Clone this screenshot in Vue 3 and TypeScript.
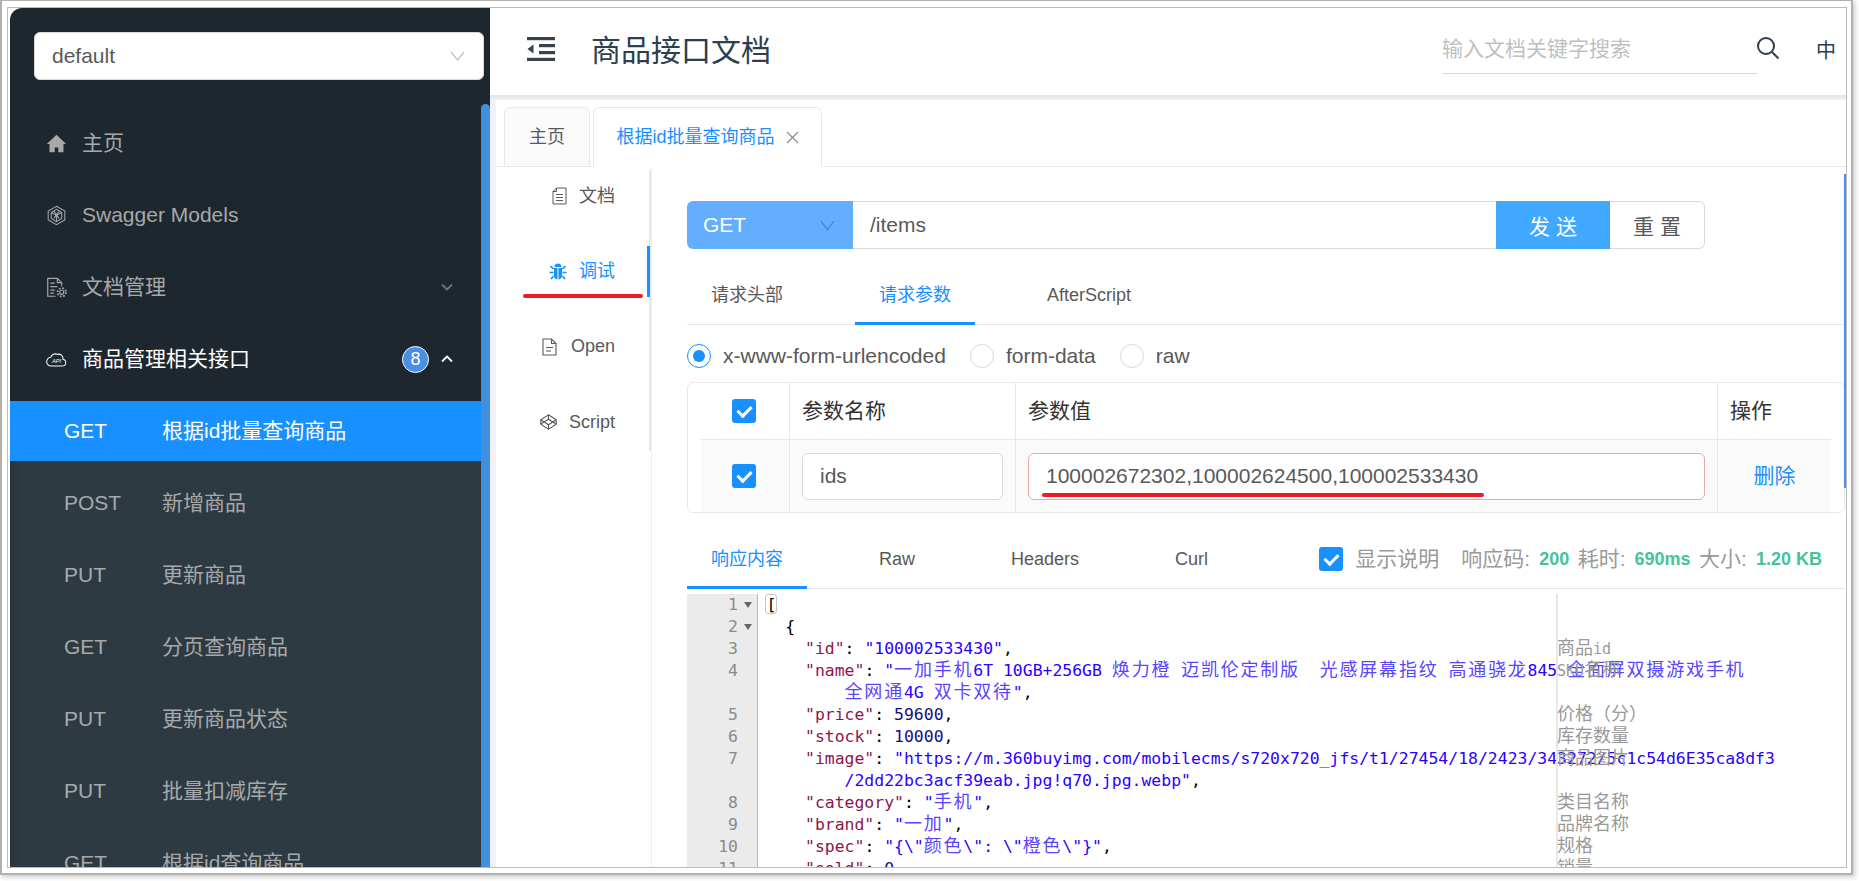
<script setup lang="ts">
type Part = [string, string];
type Row = { num: string; fold?: boolean; parts: Part[] };
type Cell = { text: string; cjk: boolean };

const menuItems = [
  { method: "GET", name: "根据id批量查询商品", active: true },
  { method: "POST", name: "新增商品" },
  { method: "PUT", name: "更新商品" },
  { method: "GET", name: "分页查询商品" },
  { method: "PUT", name: "更新商品状态" },
  { method: "PUT", name: "批量扣减库存" },
  { method: "GET", name: "根据id查询商品" }
];

const indent = "    ";
const wrapIndent = "        ";

const rows: Row[] = [
  { num: "1", fold: true, parts: [["bracket", "["]] },
  { num: "2", fold: true, parts: [["", "  {"]] },
  { num: "3", parts: [["", indent], ["key", '"id"'], ["", ": "], ["str", '"100002533430"'], ["", ","]] },
  {
    num: "4",
    parts: [
      ["", indent],
      ["key", '"name"'],
      ["", ": "],
      ["str", '"一加手机6T 10GB+256GB 焕力橙 迈凯伦定制版  光感屏幕指纹 高通骁龙845 全面屏双摄游戏手机']
    ]
  },
  { num: "", parts: [["", wrapIndent], ["str", '全网通4G 双卡双待"'], ["", ","]] },
  { num: "5", parts: [["", indent], ["key", '"price"'], ["", ": "], ["int", "59600"], ["", ","]] },
  { num: "6", parts: [["", indent], ["key", '"stock"'], ["", ": "], ["int", "10000"], ["", ","]] },
  {
    num: "7",
    parts: [
      ["", indent],
      ["key", '"image"'],
      ["", ": "],
      ["str", '"https://m.360buyimg.com/mobilecms/s720x720_jfs/t1/27454/18/2423/343272/5c1c54d6E35ca8df3']
    ]
  },
  { num: "", parts: [["", wrapIndent], ["str", '/2dd22bc3acf39eab.jpg!q70.jpg.webp"'], ["", ","]] },
  { num: "8", parts: [["", indent], ["key", '"category"'], ["", ": "], ["str", '"手机"'], ["", ","]] },
  { num: "9", parts: [["", indent], ["key", '"brand"'], ["", ": "], ["str", '"一加"'], ["", ","]] },
  { num: "10", parts: [["", indent], ["key", '"spec"'], ["", ": "], ["str", '"{\\"颜色\\": \\"橙色\\"}"'], ["", ","]] },
  { num: "11", parts: [["", indent], ["key", '"sold"'], ["", ": "], ["int", "0"], ["", ","]] }
];

const notes = ["", "", "商品id", "SKU名称", "", "价格（分）", "库存数量", "商品图片", "", "类目名称", "品牌名称", "规格", "销量"];

// ace gives every CJK character two columns, so each one gets its own box
function cells(text: string): Cell[] {
  const out: Cell[] = [];
  for (const chunk of text.split(/([\u3000-\uffef])/)) {
    if (chunk) out.push({ text: chunk, cjk: /[\u3000-\uffef]/.test(chunk) });
  }
  return out;
}
</script>

<template>
  <div class="page">
    <div class="frame">
      <aside class="sidebar">
        <div class="group-select">
          <span>default</span>
          <svg width="15" height="10" viewBox="0 0 15 10"><path d="M1 1l6.500 8L14 1" fill="none" stroke="#bfbfbf" stroke-width="1.200" /></svg>
        </div>

        <div class="menu-head">
          <svg class="menu-icon" viewBox="0 0 24 24"><path fill-rule="evenodd" d="M12 2L1 12.500h3V22h16v-9.500h3zM10 22v-5.500h4V22z" fill="#a6a9ab" /></svg>
          <span class="zh">主页</span>
        </div>
        <div class="menu-head">
          <svg class="menu-icon" viewBox="0 0 24 24" fill="none" stroke="#a6a9ab" stroke-width="1.200">
            <path d="M12 1.500l9.500 5.500v10L12 22.500 2.500 17V7z" />
            <path d="M12 5l6 3.500v7L12 19l-6-3.500v-7zM6 8.500l6 3.500 6-3.500M12 12v7M9 6.800l6 8.500M15 6.800l-6 8.500" />
          </svg>
          <span>Swagger Models</span>
        </div>
        <div class="menu-head">
          <svg class="menu-icon" viewBox="0 0 24 24" fill="none" stroke="#a6a9ab" stroke-width="1.300">
            <path d="M11 22H2V1.500h11l5 5v4" />
            <path d="M13 1.500v5h5M5 7h5M5 11h8M5 15h5M5 18.500h4" />
            <circle cx="18" cy="17.500" r="2.300" />
            <circle cx="18" cy="17.500" r="4.800" stroke-width="2" stroke-dasharray="2 1.770" />
          </svg>
          <span class="zh">文档管理</span>
          <svg class="chevron" width="12" height="8" viewBox="0 0 12 8"><path d="M1 1.500l5 5 5-5" fill="none" stroke="#6f767b" stroke-width="1.800" /></svg>
        </div>
        <div class="menu-head open">
          <svg class="menu-icon" viewBox="0 0 24 24" fill="none" stroke="#fff" stroke-width="1.200">
            <path d="M6 19.500h12.500a4 4 0 0 0 .9-7.900 5 5 0 0 0-6.400-5.500 5.500 5.500 0 0 0-7.500 3.400A4.300 4.300 0 0 0 6 19.500z" />
            <text x="12" y="16.500" text-anchor="middle" font-size="6.500" font-style="italic" fill="#fff" stroke="none" font-family="Liberation Sans">API</text>
          </svg>
          <span class="zh">商品管理相关接口</span>
          <span class="count">8</span>
          <svg class="chevron up" width="12" height="8" viewBox="0 0 12 8"><path d="M1 6.500l5-5 5 5" fill="none" stroke="#fff" stroke-width="1.800" /></svg>
        </div>

        <div class="submenu">
          <div v-for="item in menuItems" :key="item.method + item.name" class="sub-item" :class="{ active: item.active }">
            <span class="sub-method">{{ item.method }}</span>
            <span class="zh">{{ item.name }}</span>
          </div>
        </div>
        <div class="side-thumb"></div>
      </aside>

      <main class="main">
        <header class="topbar">
          <svg class="fold-btn" width="28" height="24" viewBox="0 0 28 24" fill="#36434f">
            <rect x="0" y="0" width="28" height="3.200" />
            <rect x="12" y="7" width="16" height="3.200" />
            <rect x="12" y="14" width="16" height="3.200" />
            <rect x="0" y="20.800" width="28" height="3.200" />
            <path d="M6.500 7.500v9L0.500 12z" />
          </svg>
          <h1 class="title">商品接口文档</h1>
          <div class="search">输入文档关键字搜索</div>
          <svg class="search-icon" width="24" height="24" viewBox="0 0 24 24" fill="none" stroke="#2c3e50" stroke-width="2">
            <circle cx="10" cy="10" r="8" />
            <path d="M16 16l6.500 6.500" />
          </svg>
          <span class="lang">中</span>
        </header>
        <div class="top-band"></div>

        <div class="body">
          <div class="page-tabs">
            <div class="page-tab"><span class="zh">主页</span></div>
            <div class="page-tab current">
              <span class="zh">根据id批量查询商品</span>
              <svg width="13" height="13" viewBox="0 0 13 13"><path d="M1 1l11 11M12 1L1 12" fill="none" stroke="#8c8c8c" stroke-width="1.200" /></svg>
            </div>
          </div>

          <div class="content">
            <nav class="side-tabs">
              <div class="side-tab">
                <svg width="15" height="18" viewBox="0 0 15 18" fill="none" stroke="#595959" stroke-width="1">
                  <path d="M4.500 1h9.500v16H1V4.500z" />
                  <path d="M4.500 1v3.500H1M4 7.500h7M4 10.500h7M4 13.500h7" />
                </svg>
                <span class="zh">文档</span>
              </div>
              <div class="side-tab active">
                <svg width="18" height="17" viewBox="0 0 18 17" fill="#1890ff">
                  <path d="M5 5h3.500v11.500C6 16.300 5 14.500 5 12zM9.500 5H13v7c0 2.500-1 4.300-3.500 4.500zM5.500 4a3.500 3.500 0 0 1 7 0z" />
                  <path d="M4.500 6L1.500 3M13.500 6l3-3M4.500 9.500H.5M13.500 9.500h4M4.800 13l-3 3M13.200 13l3 3" stroke="#1890ff" stroke-width="1.700" fill="none" />
                </svg>
                <span class="zh">调试</span>
                <i class="red-mark nav-mark"></i>
              </div>
              <div class="side-tab wide-gap">
                <svg width="15" height="18" viewBox="0 0 15 18" fill="none" stroke="#595959" stroke-width="1.100">
                  <path d="M1 1h8.500L14 5.500V17H1z" />
                  <path d="M9.500 1v4.500H14M4 9.500h7M4 13h5" />
                </svg>
                <span>Open</span>
              </div>
              <div class="side-tab">
                <svg width="17" height="16" viewBox="0 0 17 16" fill="none" stroke="#595959" stroke-width="1.100">
                  <path d="M8.500 .8l7.700 5v4.400l-7.700 5-7.700-5V5.800z" />
                  <path d="M8.500 .8v4.400l-7.700 4.800M8.500 5.200l7.700 4.800M.8 5.800l7.700 5 7.700-5M8.500 10.800v4.400" />
                </svg>
                <span>Script</span>
              </div>
            </nav>

            <section class="panel">
              <div class="panel-thumb"></div>

              <div class="request-bar">
                <div class="method">
                  <span>GET</span>
                  <svg width="15" height="11" viewBox="0 0 15 11"><path d="M1 1l6.500 8.500L14 1" fill="none" stroke="#4d7fb8" stroke-width="1.200" /></svg>
                </div>
                <div class="url">/items</div>
                <div class="send">发 送</div>
                <div class="reset">重 置</div>
              </div>

              <div class="tabs request-tabs">
                <div class="tab">请求头部</div>
                <div class="tab active">请求参数</div>
                <div class="tab">AfterScript</div>
              </div>

              <div class="radios">
                <span class="radio on"><i></i></span>
                <span class="radio-label">x-www-form-urlencoded</span>
                <span class="radio"></span>
                <span class="radio-label">form-data</span>
                <span class="radio"></span>
                <span class="radio-label">raw</span>
              </div>

              <div class="params">
                <div class="param-head">
                  <div class="cell check-cell"><span class="checkbox"></span></div>
                  <div class="cell"><span class="zh">参数名称</span></div>
                  <div class="cell"><span class="zh">参数值</span></div>
                  <div class="cell last"><span class="zh">操作</span></div>
                </div>
                <div class="param-row">
                  <div class="cell check-cell"><span class="checkbox"></span></div>
                  <div class="cell"><div class="field">ids</div></div>
                  <div class="cell">
                    <div class="field value">
                      <span>100002672302,100002624500,100002533430</span>
                      <i class="red-mark value-mark"></i>
                    </div>
                  </div>
                  <div class="cell remove"><span class="zh">删除</span></div>
                </div>
              </div>

              <div class="tabs response-tabs">
                <div class="tab active">响应内容</div>
                <div class="tab">Raw</div>
                <div class="tab">Headers</div>
                <div class="tab">Curl</div>
                <div class="resp-meta">
                  <span class="checkbox"></span>
                  <span class="show-desc zh">显示说明</span>
                  <span class="meta-label first zh">响应码:</span>
                  <b>200</b>
                  <span class="meta-label zh">耗时:</span>
                  <b>690ms</b>
                  <span class="meta-label zh">大小:</span>
                  <b>1.20 KB</b>
                </div>
              </div>

              <div class="editor">
                <div class="gutter">
                  <div v-for="(row, i) in rows" :key="i" class="gutter-row">
                    <span class="line-no">{{ row.num }}</span>
                    <i v-if="row.fold" class="fold"></i>
                  </div>
                </div>
                <div class="code">
                  <div v-for="(row, i) in rows" :key="i" class="code-row">
                    <span v-for="(part, j) in row.parts" :key="j" :class="part[0]">
                      <template v-for="(cell, k) in cells(part[1])" :key="k">
                        <span v-if="cell.cjk" class="cjk">{{ cell.text }}</span>
                        <template v-else>{{ cell.text }}</template>
                      </template>
                    </span>
                  </div>
                </div>
                <div class="print-margin"></div>
                <div class="notes">
                  <div v-for="(note, i) in notes" :key="i" class="note-row">
                    <template v-for="(cell, k) in cells(note)" :key="k">
                      <span v-if="cell.cjk" class="cjk">{{ cell.text }}</span>
                      <template v-else>{{ cell.text }}</template>
                    </template>
                  </div>
                </div>
              </div>
            </section>
          </div>
        </div>
      </main>
    </div>
  </div>
</template>

<style>
html,
body {
  margin: 0;
  height: 881px;
  background: #fff;
  overflow: hidden;
}
</style>

<style scoped>
.page {
  box-sizing: border-box;
  width: 1853px;
  height: 875px;
  padding: 6px 4px 5px 5px;
  border: 2px solid #b0b0b0;
  border-top-width: 1px;
  background: #fff;
  box-shadow: 2px 2px 5px rgba(0, 0, 0, 0.22);
  font-family: "Liberation Sans", "Noto Sans CJK SC", sans-serif;
  color: #595959;
}

.frame {
  box-sizing: border-box;
  display: flex;
  height: 861px;
  padding-left: 2px;
  border: 1px solid #bbb;
  overflow: hidden;
}

/* Noto CJK sits lower on the line than the reference's font */
.zh {
  display: inline-block;
  transform: translateY(-2px);
}

.sidebar {
  position: relative;
  flex: 0 0 480px;
  padding-top: 24px;
  box-sizing: border-box;
  background: #1f272e;
  border-radius: 12px 0 0 0;
  overflow: hidden;
  font-size: 21px;
  color: #a6a9ab;
}

.group-select {
  box-sizing: border-box;
  position: relative;
  z-index: 1;
  display: flex;
  align-items: center;
  justify-content: space-between;
  width: 450px;
  height: 48px;
  margin: 0 0 27px 24px;
  padding: 0 18px 0 17px;
  background: #fff;
  border: 1px solid #d9d9d9;
  border-radius: 6px;
  color: #595959;
}

.menu-head {
  display: flex;
  align-items: center;
  height: 72px;
  padding-left: 36px;
}

.menu-head.open {
  color: #fff;
  margin-bottom: 6px;
}

.menu-icon {
  flex: none;
  width: 21px;
  height: 21px;
  margin-right: 15px;
}

.chevron {
  margin-left: auto;
  margin-right: 37px;
}

.chevron.up {
  margin-left: 12px;
}

.count {
  box-sizing: border-box;
  display: flex;
  align-items: center;
  justify-content: center;
  width: 27px;
  height: 27px;
  margin-left: auto;
  border: 1px solid #fff;
  border-radius: 50%;
  background: #4a90e2;
  color: #fff;
  font-size: 18px;
}

.submenu {
  min-height: 480px;
  background: #2d3a42;
  box-shadow: inset 0 0 12px rgba(0, 0, 0, 0.25);
}

.sub-item {
  display: flex;
  align-items: center;
  height: 60px;
  margin-bottom: 12px;
  padding-left: 54px;
}

.sub-item.active {
  background: #1890ff;
  color: #fff;
}

.sub-method {
  width: 98px;
}

.side-thumb {
  position: absolute;
  top: 96px;
  bottom: 0;
  right: 0;
  width: 9px;
  background: #428fe0;
  border-radius: 5px 5px 0 0;
}

.main {
  flex: 1;
  min-width: 0;
  display: flex;
  flex-direction: column;
}

.topbar {
  flex: none;
  display: flex;
  align-items: center;
  height: 87px;
  padding-bottom: 5px;
  box-sizing: border-box;
  padding-left: 37px;
}

.title {
  margin: 0 0 2px 36px;
  font-size: 30px;
  font-weight: 400;
  color: #2c3e50;
}

.search {
  box-sizing: border-box;
  width: 315px;
  height: 50px;
  margin-left: auto;
  border-bottom: 1px solid #d9d9d9;
  font-size: 21px;
  line-height: 50px;
  color: #bfbfbf;
}

.search-icon {
  margin: -2px 0 0 -1px;
}

.lang {
  width: 20px;
  margin: 0 10px 0 36px;
  font-size: 20px;
  color: #2c3e50;
}

.top-band {
  flex: none;
  height: 5px;
  background: linear-gradient(180deg, #e3e6e9, #eef0f2);
}

.body {
  flex: 1;
  min-height: 0;
  display: flex;
  flex-direction: column;
  border-left: 6px solid #f0f1f6;
}

.page-tabs {
  flex: none;
  display: flex;
  height: 60px;
  margin-top: 7px;
  padding-left: 8px;
  border-bottom: 1px solid #e8e8e8;
  box-sizing: border-box;
  gap: 3px;
}

.page-tab {
  box-sizing: border-box;
  display: flex;
  align-items: center;
  justify-content: center;
  gap: 11px;
  height: 60px;
  width: 86px;
  border: 1px solid #e8e8e8;
  border-radius: 6px 6px 0 0;
  background: #fafafa;
  font-size: 18px;
}

.page-tab.current {
  width: 229px;
  background: #fff;
  border-bottom-color: #fff;
  color: #1890ff;
}

.content {
  flex: 1;
  min-height: 0;
  display: flex;
}

.side-tabs {
  box-sizing: border-box;
  flex: 0 0 155px;
  align-self: flex-start;
  height: 281px;
  margin-top: 3px;
  border-right: 2px solid #e8e8e8;
  font-size: 18px;
}

.side-tab {
  position: relative;
  display: flex;
  align-items: center;
  justify-content: flex-end;
  gap: 12px;
  height: 51px;
  margin-bottom: 24.500px;
  padding-right: 34px;
}

.side-tab.wide-gap {
  gap: 14px;
}

.side-tab.active {
  color: #1890ff;
}

.side-tab.active::after {
  content: "";
  position: absolute;
  top: 0;
  bottom: 0;
  right: -1px;
  width: 3px;
  background: #1890ff;
}

.red-mark {
  position: absolute;
  height: 4px;
  border-radius: 2px;
  background: #ed1c24;
}

.nav-mark {
  left: 27px;
  top: 48px;
  width: 120px;
}

.panel {
  position: relative;
  flex: 1;
  min-width: 0;
  display: flex;
  flex-direction: column;
  box-sizing: border-box;
  padding: 34px 1px 0 35px;
  border-left: 1px solid #eee;
}

.panel-thumb {
  position: absolute;
  top: 7px;
  right: 0;
  width: 2px;
  height: 314px;
  background: #4a90e2;
}

.request-bar {
  flex: none;
  display: flex;
  width: 1018px;
  height: 48px;
  font-size: 21px;
}

.method {
  box-sizing: border-box;
  flex: 0 0 166px;
  display: flex;
  align-items: center;
  justify-content: space-between;
  padding: 0 18px 0 16px;
  background: #63aeff;
  border-radius: 6px 0 0 6px;
  color: #fff;
}

.url {
  flex: 1;
  box-sizing: border-box;
  padding-left: 17px;
  line-height: 46px;
  border: 1px solid #d9d9d9;
  border-width: 1px 0;
}

.send,
.reset {
  display: flex;
  align-items: center;
  justify-content: center;
  box-sizing: border-box;
}

.send {
  flex: 0 0 114px;
  background: #40a9ff;
  color: #fff;
}

.reset {
  flex: 0 0 95px;
  border: 1px solid #d9d9d9;
  border-left: 0;
  border-radius: 0 6px 6px 0;
}

.tabs {
  flex: none;
  display: flex;
  align-items: center;
  gap: 48px;
  box-sizing: border-box;
  height: 60px;
  border-bottom: 1px solid #e8e8e8;
  font-size: 18px;
}

.request-tabs {
  margin-top: 16px;
}

.response-tabs {
  margin-top: 16px;
}

.tab {
  position: relative;
  padding: 2px 24px 0;
  line-height: 57px;
}

.tab.active {
  color: #1890ff;
}

.tab.active::after {
  content: "";
  position: absolute;
  left: 0;
  right: 0;
  bottom: -1px;
  height: 3px;
  background: #1890ff;
}

.radios {
  flex: none;
  display: flex;
  align-items: center;
  height: 24px;
  margin: 19px 0 14px;
  font-size: 21px;
}

.radio {
  box-sizing: border-box;
  display: flex;
  align-items: center;
  justify-content: center;
  width: 24px;
  height: 24px;
  border: 1px solid #d9d9d9;
  border-radius: 50%;
}

.radio.on {
  border-color: #1890ff;
}

.radio i {
  width: 12px;
  height: 12px;
  border-radius: 50%;
  background: #1890ff;
}

.radio-label {
  margin: 0 24px 0 12px;
}

.params {
  flex: none;
  box-sizing: border-box;
  width: 1158px;
  border: 1px solid #e8e8e8;
  border-radius: 6px;
  font-size: 21px;
  color: #333;
}

.param-head {
  display: grid;
  grid-template-columns: 102px 226px 702px 126px;
  height: 56px;
}

.param-row {
  display: grid;
  grid-template-columns: 89px 226px 702px 113px;
  height: 73px;
  margin: 0 13px;
  background: #fafafa;
  border-top: 1px solid #e8e8e8;
  box-sizing: border-box;
}

.cell {
  display: flex;
  align-items: center;
  box-sizing: border-box;
  padding: 0 12px;
  border-right: 1px solid #e8e8e8;
}

.cell.last,
.cell.remove {
  border-right: 0;
}

.param-head .check-cell {
  padding-left: 44px;
}

.param-row .check-cell {
  padding-left: 31px;
}

.remove {
  justify-content: center;
  color: #1890ff;
}

.checkbox {
  position: relative;
  display: block;
  flex: none;
  width: 24px;
  height: 24px;
  border-radius: 3px;
  background: #1890ff;
}

.checkbox::after {
  content: "";
  position: absolute;
  left: 8px;
  top: 4px;
  width: 6px;
  height: 11px;
  border: solid #fff;
  border-width: 0 3px 3px 0;
  transform: rotate(45deg);
}

.field {
  position: relative;
  box-sizing: border-box;
  flex: 1;
  height: 47px;
  padding-left: 17px;
  background: #fff;
  border: 1px solid #d9d9d9;
  border-radius: 6px;
  line-height: 43px;
  color: #595959;
}

.field.value {
  border-color: #e8a9a9;
}

.value-mark {
  left: 13px;
  top: 39px;
  width: 442px;
}

.resp-meta {
  display: flex;
  align-items: center;
  margin-left: auto;
  padding-right: 23px;
  font-size: 21px;
  color: #999;
}

.show-desc {
  margin-left: 12px;
}

.meta-label {
  margin-left: 8.500px;
}

.meta-label.first {
  margin-left: 22px;
}

.resp-meta b {
  margin-left: 9px;
  padding-top: 1px;
  font-size: 18px;
  color: #48c299;
}

.editor {
  position: relative;
  flex: 1;
  min-height: 0;
  display: flex;
  margin-top: 5px;
  overflow: hidden;
  font-family: "DejaVu Sans Mono", "Noto Sans CJK SC", monospace;
  font-size: 16.450px;
  line-height: 22px;
}

.gutter {
  box-sizing: border-box;
  flex: 0 0 71px;
  background: #ebebeb;
  border-right: 1px solid #b8b8b8;
  color: #8a8a8a;
}

.gutter-row {
  display: flex;
  align-items: center;
  height: 22px;
}

.line-no {
  width: 51px;
  text-align: right;
}

.fold {
  width: 0;
  height: 0;
  margin-left: 6px;
  border: 4px solid transparent;
  border-top: 6px solid #666;
  border-bottom: 0;
}

.code {
  flex: 1;
  min-width: 0;
  padding-left: 7.400px;
  color: #000;
}

.code-row,
.note-row {
  height: 22px;
  white-space: pre;
}

.cjk {
  display: inline-block;
  width: 19.800px;
  font-family: "Noto Sans CJK SC", sans-serif;
  font-size: 18px;
  line-height: 16px;
}

.key {
  color: #8c1550;
}

.str {
  color: #2a00ff;
}

.str .cjk {
  color: #5a45ff;
}

.int {
  color: #10107e;
}

.bracket {
  display: inline-block;
  box-sizing: border-box;
  height: 20px;
  line-height: 20px;
  border: 1px solid #c6c6c6;
  border-radius: 3px;
}

.print-margin {
  position: absolute;
  top: 0;
  bottom: 0;
  left: 869px;
  width: 2px;
  background: #e8e8e8;
}

.notes {
  position: absolute;
  top: 0;
  left: 870px;
  font-size: 15px;
  color: #999;
}

.notes .cjk {
  width: 18px;
}
</style>
